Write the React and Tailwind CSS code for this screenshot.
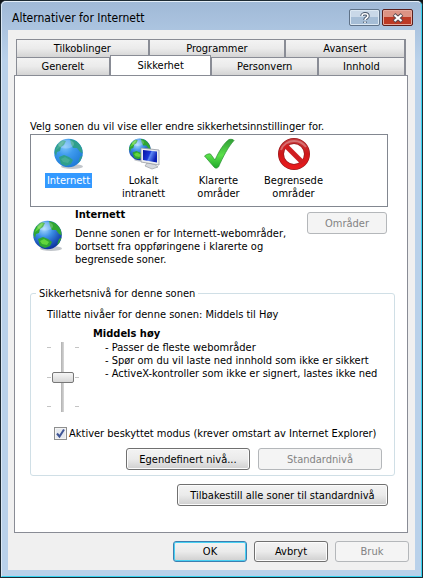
import React, { useState } from 'react';
import clsx from 'clsx';

const backTabs = [
  { name: 'Tilkoblinger', width: 'flex-[133]' },
  { name: 'Programmer', width: 'flex-[137]' },
  { name: 'Avansert', width: 'flex-[120]' },
];

const frontTabs = [
  { name: 'Generelt', width: 'flex-[94]' },
  { name: 'Sikkerhet', width: 'flex-[102]' },
  { name: 'Personvern', width: 'flex-[107]' },
  { name: 'Innhold', width: 'flex-[87]' },
];

const GlobeShapes = ({ id, selected }) => (
  <>
    <defs>
      <radialGradient id={id} cx="0.38" cy="0.28" r="0.75">
        <stop offset="0" stopColor={selected ? '#7cc4fb' : '#a9dcff'} />
        <stop offset="0.4" stopColor={selected ? '#3f9bee' : '#3c8fe6'} />
        <stop offset="1" stopColor={selected ? '#1e7ad6' : '#0b2f9c'} />
      </radialGradient>
      <clipPath id={`${id}-clip`}>
        <circle cx="15.5" cy="15" r="14" />
      </clipPath>
    </defs>
    <ellipse cx="19" cy="28.5" rx="11" ry="2.5" fill="#9aa0a8" opacity="0.6" />
    <circle cx="15.5" cy="15" r="14.3" fill={`url(#${id})`} />
    <g clipPath={`url(#${id}-clip)`} fill={selected ? '#2f9f8c' : '#2fa632'}>
      <path d="M1 14 C2 8 5 4 9 2 L13 3 L11 7 L8 9 L7 13 L4 14 L3 18 Z" />
      <path d="M17 1 L23 2 L29 8 L31 16 L27 14 L24 10 L20 10 L18 6 Z" />
      <path d="M6 19 L11 17 L16 19 L20 22 L18 26 L13 28 L8 26 Z" />
      <path d="M27 19 L30 17 L28 23 L25 25 Z" />
    </g>
    <g clipPath={`url(#${id}-clip)`} fill={selected ? '#45ad96' : '#62d53c'}>
      <path d="M3 12 C4 8 7 5 10 3 L11 4 L9 7 L6 10 Z" />
      <path d="M8 21 L12 19 L17 22 L15 25 L10 24 Z" />
    </g>
    <ellipse cx="13" cy="6" rx="8" ry="4.5" fill="#fff" opacity="0.22" />
  </>
);

const Globe = ({ id, selected }) => (
  <svg viewBox="0 0 32 32" className="size-8 shrink-0" aria-hidden="true">
    <GlobeShapes id={id} selected={selected} />
  </svg>
);

const Intranet = () => (
  <svg viewBox="0 0 32 32" className="size-8 shrink-0" aria-hidden="true">
    <g transform="scale(0.76)">
      <GlobeShapes id="globe-intranet" />
    </g>
    <defs>
      <linearGradient id="screen" x1="0" y1="0" x2="1" y2="0.4">
        <stop offset="0" stopColor="#0712a0" />
        <stop offset="0.5" stopColor="#1a38d8" />
        <stop offset="0.6" stopColor="#5d88f5" />
        <stop offset="1" stopColor="#0a1fb4" />
      </linearGradient>
    </defs>
    <path d="M19 25 L26 26 L30 29 L24 31 L17 28 Z" fill="#d5d8dc" stroke="#8d9299" strokeWidth="0.6" />
    <path d="M13 10 L31 12 L31 27 L13 24 Z" fill="#eceef0" stroke="#959aa2" strokeWidth="0.8" />
    <path d="M15 12 L29 13.6 L29 24.6 L15 22 Z" fill="url(#screen)" />
  </svg>
);

const Trusted = () => (
  <svg viewBox="0 0 32 32" className="size-8 shrink-0" aria-hidden="true">
    <defs>
      <linearGradient id="tick" x1="0" y1="0" x2="0" y2="1">
        <stop offset="0" stopColor="#2f9e35" />
        <stop offset="0.55" stopColor="#5be04a" />
        <stop offset="1" stopColor="#1fa92a" />
      </linearGradient>
    </defs>
    <path
      d="M1.5 18 C4 16 6 15.5 7.5 16 L12 22 C16 13 21 5 26 1.5 C28.5 1 30.5 1.5 31 2.5 C25 9 20 19 15.5 29 C14 30.5 12 30.5 11 29 Z"
      fill="url(#tick)"
      stroke="#2a8f30"
      strokeWidth="0.7"
    />
  </svg>
);

const Restricted = () => (
  <svg viewBox="0 0 32 32" className="size-8 shrink-0" aria-hidden="true">
    <defs>
      <linearGradient id="ban" x1="0" y1="0" x2="0" y2="1">
        <stop offset="0" stopColor="#c4383a" />
        <stop offset="0.5" stopColor="#cf1518" />
        <stop offset="1" stopColor="#e81b1d" />
      </linearGradient>
    </defs>
    <circle cx="16" cy="16" r="13" fill="#fff" stroke="#9c1a1d" strokeWidth="6" />
    <circle cx="16" cy="16" r="13" fill="none" stroke="url(#ban)" strokeWidth="4.6" />
    <path d="M7 7 L25 25" stroke="#cf1d20" strokeWidth="5" />
    <path d="M3 12 C5 6 11 3 16 3 C21 3 25 5 28 9" fill="none" stroke="#fff" strokeWidth="2" opacity="0.3" />
  </svg>
);

const zones = [
  { id: 'internet', lines: ['Internett'], icon: <Globe id="globe-list" selected /> },
  { id: 'intranet', lines: ['Lokalt', 'intranett'], icon: <Intranet /> },
  { id: 'trusted', lines: ['Klarerte', 'områder'], icon: <Trusted /> },
  { id: 'restricted', lines: ['Begrensede', 'områder'], icon: <Restricted /> },
];

const Tab = ({ name, width, active }) => (
  <button
    type="button"
    role="tab"
    aria-selected={active}
    className={clsx(
      'min-w-0 border-[#898c95] text-center',
      width,
      active
        ? '-mt-[2px] -mb-px h-[21px] border-x border-t bg-white pb-px'
        : 'h-[18px] border-t border-r border-l bg-linear-to-b from-[#f3f3f3] via-[#ebebeb] to-[#d4d4d4]'
    )}
  >
    {name}
  </button>
);

const Button = ({ children, className, primary, ...rest }) => (
  <button
    type="button"
    className={clsx(
      'rounded-[3px] border text-center',
      'disabled:border-[#b4b7ba] disabled:bg-none disabled:bg-[#f4f4f4] disabled:text-[#838383]',
      'bg-linear-to-b from-[#f3f3f3] from-0% via-[#ebebeb] via-50% to-[#cfcfcf]',
      primary
        ? 'border-[#3c7fb1] shadow-[inset_0_0_0_1px_#48d0f2]'
        : 'border-[#707070] shadow-[inset_0_0_0_1px_#fcfcfc] disabled:shadow-none',
      className
    )}
    {...rest}
  >
    {children}
  </button>
);

const SliderTicks = () => (
  <div className="flex h-[60px] w-1 flex-col justify-between">
    <span className="h-px bg-[#c4c4c4]" />
    <span className="h-px bg-[#c4c4c4]" />
    <span className="h-px bg-[#c4c4c4]" />
  </div>
);

const App = () => {
  const [zone, setZone] = useState('internet');
  const [level, setLevel] = useState(1);
  const [protectedMode, setProtectedMode] = useState(true);

  return (
    <div className="min-h-screen bg-[#101418] font-['DejaVu_Sans_Condensed','DejaVu_Sans',sans-serif] text-[11px] leading-[13px] text-black">
      <div className="flex min-h-screen flex-col rounded-t-[6px] border border-[#1d2a33] bg-[#b9d1ea]">
        <div className="flex grow flex-col rounded-t-[5px] border border-t-[#e4eef8] border-r-[#35d3f0] border-b-[#35d3f0] border-l-[#dbe8f5] bg-linear-to-b from-[#a0b9d7] to-[#b9d1ea] to-10% px-[6px] pb-[6px]">
          {/* Title bar */}
          <header className="flex h-7 items-center pt-[3px]">
            <h1 className="grow pl-1 text-[12px] leading-4">Alternativer for Internett</h1>
            <button
              type="button"
              aria-label="Hjelp"
              className="mr-[2px] flex h-[17px] w-[31px] items-center justify-center rounded-[2px] border border-[#5f7288] bg-linear-to-b from-[#c9d8e8] from-50% to-[#a5bdd6] to-50% shadow-[inset_0_0_0_1px_#dce8f3]"
            >
              <svg viewBox="0 0 10 12" className="h-3 w-[10px]" aria-hidden="true">
                <path d="M2 4 C2 1 8 1 8 4 C8 6 5 6 5 8 M5 9.5 V11" fill="none" stroke="#47566a" strokeWidth="3.4" />
                <path d="M2 4 C2 1 8 1 8 4 C8 6 5 6 5 8 M5 9.5 V11" fill="none" stroke="#fff" strokeWidth="1.6" />
              </svg>
            </button>
            <button
              type="button"
              aria-label="Lukk"
              className="mr-[2px] flex h-[17px] w-[31px] items-center justify-center rounded-[2px] border border-[#5b1f1c] bg-linear-to-b from-[#dc9384] from-50% to-[#bd3a25] to-50% shadow-[inset_0_0_0_1px_#e6a99d]"
            >
              <svg viewBox="0 0 12 10" className="h-[10px] w-3" aria-hidden="true">
                <path d="M2 1.5 L10 8.5 M10 1.5 L2 8.5" stroke="#5a4a50" strokeWidth="4" />
                <path d="M2.5 2 L9.5 8 M9.5 2 L2.5 8" stroke="#fff" strokeWidth="2.2" />
              </svg>
            </button>
          </header>

          <main className="flex grow flex-col bg-[#f0f0f0] px-[6px] pt-[9px] pb-2">
            {/* Tabs */}
            <div role="tablist" className="mr-[3px] ml-[2px]">
              <div className="flex border-r border-[#898c95]">
                {backTabs.map((tab) => (
                  <Tab key={tab.name} {...tab} active={false} />
                ))}
              </div>
              <div className="flex border-r border-[#898c95]">
                {frontTabs.map((tab) => (
                  <Tab key={tab.name} {...tab} active={tab.name === 'Sikkerhet'} />
                ))}
              </div>
            </div>

            <section role="tabpanel" className="mr-px grow border border-[#898c95] bg-white pt-[44px] pr-3 pb-5 pl-[15px]">
              <p id="zone-label">Velg sonen du vil vise eller endre sikkerhetsinnstillinger for.</p>

              {/* Zone list */}
              <div
                role="listbox"
                aria-labelledby="zone-label"
                className="mt-px mr-[7px] flex h-[73px] items-start border border-[#828790] pt-[3px]"
              >
                {zones.map(({ id, lines, icon }) => (
                  <button
                    key={id}
                    type="button"
                    role="option"
                    aria-selected={zone === id}
                    onClick={() => setZone(id)}
                    className="flex w-[75px] flex-col items-center"
                  >
                    {icon}
                    <span
                      className={clsx(
                        'mt-[3px] px-[2px] py-px',
                        zone === id && 'bg-[#3399ff] text-white'
                      )}
                    >
                      {lines.map((line) => (
                        <span key={line} className="block">{line}</span>
                      ))}
                    </span>
                  </button>
                ))}
              </div>

              {/* Zone description */}
              <div className="mr-2 flex items-start">
                <div className="w-[45px] pt-[13px] pl-[2px]">
                  <Globe id="globe-info" />
                </div>
                <div className="grow">
                  <h2 className="leading-[15px] font-bold">Internett</h2>
                  <p className="mt-[5px] whitespace-pre-line">
                    {'Denne sonen er for Internett-webområder,\nbortsett fra oppføringene i klarerte og\nbegrensede soner.'}
                  </p>
                </div>
                <Button disabled className="mt-[5px] h-[22px] w-20">Områder</Button>
              </div>

              {/* Security level */}
              <fieldset className="mt-[21px] rounded-[3px] border border-[#d0dfe6] pr-3 pb-[5px]">
                <legend className="ml-[5px] px-[3px]">Sikkerhetsnivå for denne sonen</legend>
                <p className="mt-2 ml-4">Tillatte nivåer for denne sonen: Middels til Høy</p>
                <div className="mt-[5px] ml-4 flex">
                  <div className="mt-4 flex h-[70px] w-8 items-center justify-between">
                    <SliderTicks />
                    <input
                      type="range"
                      aria-label="Sikkerhetsnivå"
                      min="0"
                      max="2"
                      value={level}
                      onChange={(e) => setLevel(Number(e.target.value))}
                      className="h-[70px] w-[22px] appearance-none bg-[linear-gradient(to_right,transparent_9px,#b0b0b0_9px,#d8d8d8_12px,transparent_12px)] [writing-mode:vertical-lr] [&::-webkit-slider-thumb]:h-[11px] [&::-webkit-slider-thumb]:w-[22px] [&::-webkit-slider-thumb]:appearance-none [&::-webkit-slider-thumb]:rounded-[2px] [&::-webkit-slider-thumb]:border [&::-webkit-slider-thumb]:border-[#777777] [&::-webkit-slider-thumb]:bg-linear-to-b [&::-webkit-slider-thumb]:from-[#f6f6f6] [&::-webkit-slider-thumb]:to-[#d6d6d6]"
                    />
                    <SliderTicks />
                  </div>
                  <div className="ml-[14px]">
                    <h3 className="leading-[15px] font-bold">Middels høy</h3>
                    <ul className="ml-3">
                      <li>- Passer de fleste webområder</li>
                      <li>- Spør om du vil laste ned innhold som ikke er sikkert</li>
                      <li>- ActiveX-kontroller som ikke er signert, lastes ikke ned</li>
                    </ul>
                  </div>
                </div>

                <label className="mt-[15px] ml-[23px] flex items-center gap-[2px]">
                  <span className="grid">
                    <input
                      type="checkbox"
                      checked={protectedMode}
                      onChange={(e) => setProtectedMode(e.target.checked)}
                      className="col-start-1 row-start-1 size-[13px] appearance-none border border-[#8e8f8f] bg-[#e6e9ee] shadow-[inset_0_0_0_1px_#f4f4f4]"
                    />
                    {protectedMode && (
                      <svg viewBox="0 0 13 13" className="pointer-events-none col-start-1 row-start-1 size-[13px]" aria-hidden="true">
                        <path d="M3 6.5 L5.5 9.5 L10 2.5" fill="none" stroke="#3f5596" strokeWidth="2" />
                      </svg>
                    )}
                  </span>
                  <span>Aktiver beskyttet modus (krever omstart av Internet Explorer)</span>
                </label>

                <div className="mt-2 flex justify-end gap-2">
                  <Button className="h-[22px] w-[124px]">Egendefinert nivå...</Button>
                  <Button disabled className="h-[22px] w-[124px]">Standardnivå</Button>
                </div>
              </fieldset>

              <div className="mt-2 mr-[7px] flex justify-end">
                <Button className="h-[22px] w-[211px]">Tilbakestill alle soner til standardnivå</Button>
              </div>
            </section>

            <footer className="mt-2 flex justify-end gap-[7px]">
              <Button primary className="h-[21px] w-[74px]">OK</Button>
              <Button className="h-[21px] w-[74px]">Avbryt</Button>
              <Button disabled className="h-[21px] w-[74px]">Bruk</Button>
            </footer>
          </main>
        </div>
      </div>
    </div>
  );
};

export default App;
